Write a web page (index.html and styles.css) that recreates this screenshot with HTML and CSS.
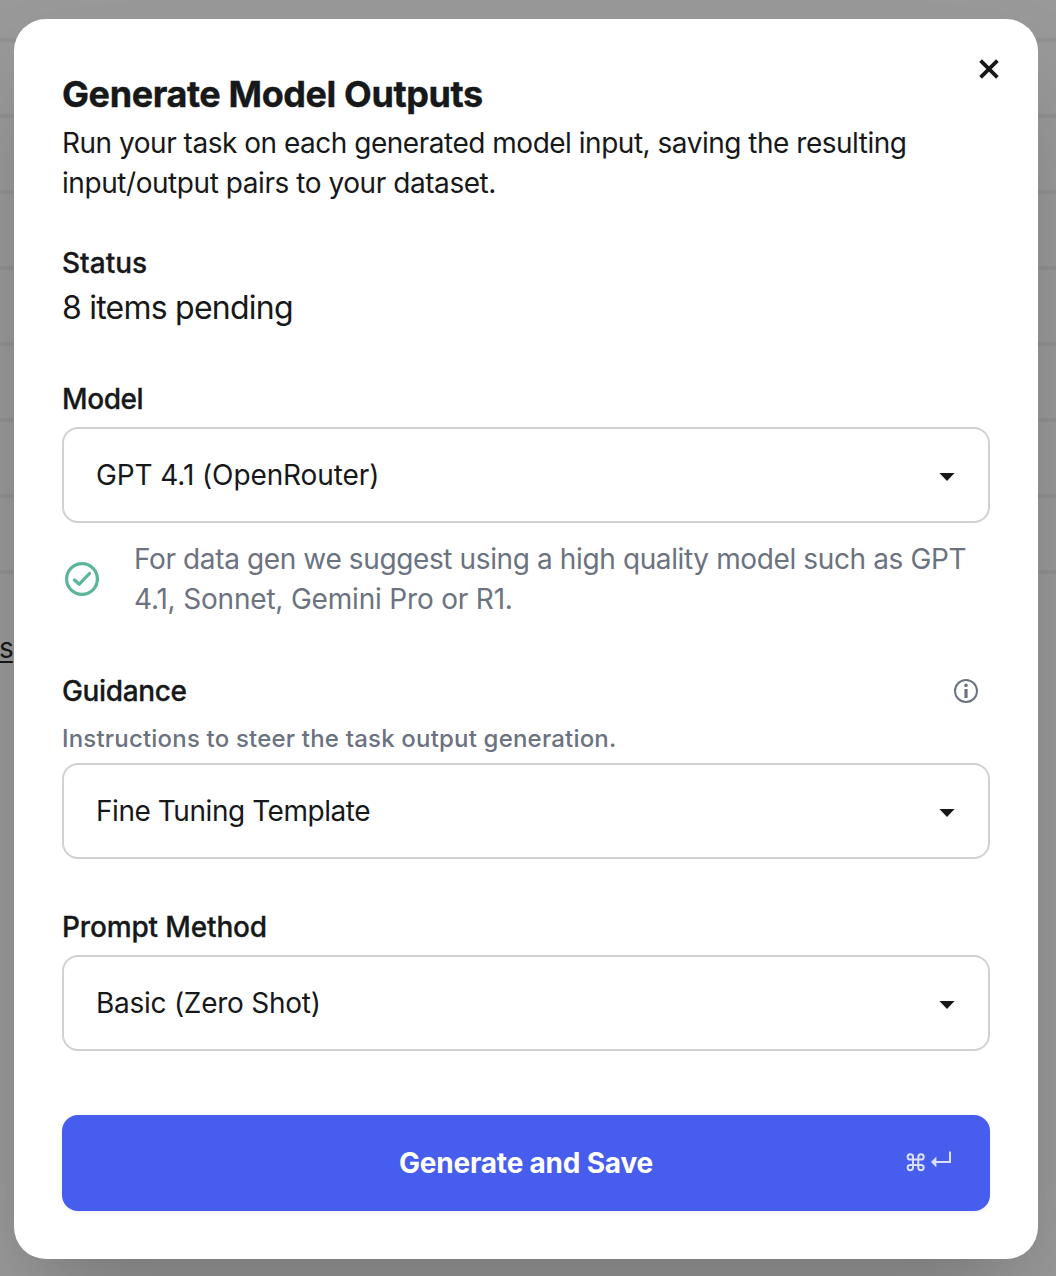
FILE: index.html
```html
<!DOCTYPE html>
<html lang="en">
<head>
<meta charset="utf-8">
<title>Generate Model Outputs</title>
<link rel="stylesheet" href="styles.css">
</head>
<body>
<div class="backdrop">
  <span class="page-link">s</span>
  <main class="modal">
    <button class="close" aria-label="Close"><svg width="22" height="22" viewBox="0 0 22 22"><path d="M2.6 2.6L19.4 19.4M19.4 2.6L2.6 19.4"/></svg></button>
    <h1 class="title">Generate Model Outputs</h1>
    <p class="intro"><span class="intro-a">Run your task on each generated model input, saving the resulting</span><br><span class="intro-b">input/output pairs to your dataset.</span></p>
    <h2 class="label status-label">Status</h2>
    <p class="status">8 items pending</p>
    <h2 class="label model-label">Model</h2>
    <div class="select"><span class="model-value">GPT 4.1 (OpenRouter)</span><svg class="caret" width="16" height="8" viewBox="0 0 16 8"><path d="M0.4 0H15.6L8 8Z"/></svg></div>
    <div class="hint">
      <svg class="check" width="40" height="40" viewBox="0 0 40 40"><circle cx="20" cy="20" r="15.4"/><path d="M12.5 21L17.3 25.2L27.5 14.5"/></svg>
      <p><span class="hint-a">For data gen we suggest using a high quality model such as GPT</span><br><span class="hint-b">4.1, Sonnet, Gemini Pro or R1.</span></p>
    </div>
    <div class="label-row">
      <h2 class="label guidance-label">Guidance</h2>
      <svg class="info" width="24" height="24" viewBox="0 0 24 24"><circle class="ring" cx="12" cy="12" r="11"/><circle cx="12" cy="6.4" r="1.8"/><path d="M10.4 10H13.6V19H10.4Z"/></svg>
    </div>
    <p class="description">Instructions to steer the task output generation.</p>
    <div class="select"><span class="guidance-value">Fine Tuning Template</span><svg class="caret" width="16" height="8" viewBox="0 0 16 8"><path d="M0.4 0H15.6L8 8Z"/></svg></div>
    <h2 class="label method-label">Prompt Method</h2>
    <div class="select"><span class="method-value">Basic (Zero Shot)</span><svg class="caret" width="16" height="8" viewBox="0 0 16 8"><path d="M0.4 0H15.6L8 8Z"/></svg></div>
    <button class="submit"><span>Generate and Save</span>
      <svg class="shortcut" width="48" height="22" viewBox="0 0 48 22"><path d="M9 8.6V5.9A2.7 2.7 0 1 0 6.3 8.6H17A2.7 2.7 0 1 0 14.3 5.9V16.6A2.7 2.7 0 1 0 17 13.9H6.3A2.7 2.7 0 1 0 9 16.6Z"/><path d="M46 .6V11H31"/><path class="head" d="M27 11L32.4 5.6V16.4Z"/></svg>
    </button>
  </main>
</div>
</body>
</html>
```
FILE: styles.css
```css
* { box-sizing: border-box; }
body { margin: 0; font-family: Inter, "Liberation Sans", sans-serif; color: #17181a; }
h1, h2, p { margin: 0; }
button { font: inherit; border: 0; padding: 0; }
svg { display: block; flex: none; }
.backdrop {
  position: relative;
  height: 1276px;
  overflow: hidden;
  padding: 19px 18px 17px 14px;
  background: #999;
}
/* table row rules of the page behind the dialog */
.backdrop::before {
  content: "";
  position: absolute;
  inset: 38px 0 auto;
  height: 536px;
  background: repeating-linear-gradient(#919191 0 4px, transparent 4px 76px);
}
.page-link {
  position: absolute; left: 0; top: 631px;
  font-size: 28px; line-height: 34px; letter-spacing: -1px; text-indent: -1px;
  text-decoration: underline; text-decoration-thickness: 2px; text-underline-offset: 3px;
}
.modal {
  position: relative;
  height: 1240px;
  padding: 48px;
  border-radius: 32px;
  background: #fff;
  box-shadow: 0 50px 100px -24px rgba(0, 0, 0, .25);
  white-space: nowrap;
}
.close { position: absolute; top: 39px; right: 38px; background: none; }
.close path { fill: none; stroke: #17181a; stroke-width: 3.8; }
.title { margin-top: -1px; padding-bottom: 1px; font-size: 36px; line-height: 56px; font-weight: 700; letter-spacing: -.41px; -webkit-text-stroke: .4px; }
.intro { font-size: 28px; line-height: 40px; }
.intro-a { letter-spacing: -.485px; }
.intro-b { letter-spacing: -.44px; }
.label { font-size: 28px; line-height: 40px; font-weight: 500; -webkit-text-stroke: .3px; }
.status-label { margin-top: 40px; }
.status { font-size: 32px; line-height: 50px; letter-spacing: -.77px; }
.model-label { margin: 46px 0 8px; letter-spacing: -.4px; }
.select {
  display: flex; align-items: center; justify-content: space-between;
  height: 96px; padding: 0 33px 0 32px;
  border: 2px solid #d1d1d1; border-radius: 16px;
  font-size: 28px;
}
.model-value { letter-spacing: -.1px; }
.guidance-value { letter-spacing: -.45px; }
.method-value { letter-spacing: -.26px; }
.caret { margin-top: 3px; fill: #17181a; }
.hint { display: flex; align-items: center; gap: 32px; margin-top: 16px; color: #6b7280; font-size: 28px; line-height: 40px; }
.hint-a { letter-spacing: -.38px; }
.hint-b { letter-spacing: -.19px; }
.check { fill: none; stroke: #5ab59b; stroke-width: 3.2; stroke-linecap: round; stroke-linejoin: round; }
.label-row { display: flex; align-items: center; justify-content: space-between; margin-top: 52px; padding-right: 12px; }
.guidance-label { letter-spacing: -.36px; }
.info { fill: #6b7280; }
.info .ring { fill: none; stroke: #6b7280; stroke-width: 2; }
.description { margin: 12px 0 8px; font-size: 24px; line-height: 32px; font-weight: 500; letter-spacing: .19px; color: #6b7280; }
.method-label { margin: 48px 0 8px; letter-spacing: -.15px; }
.submit {
  position: relative; display: flex; align-items: center; justify-content: center;
  width: 100%; height: 96px; margin-top: 64px; border-radius: 16px;
  background: #465dee; color: #fff; font-size: 28px; font-weight: 700; letter-spacing: -.2px;
  box-shadow: 0 2px 4px rgba(0, 0, 0, .06);
}
.shortcut { position: absolute; right: 38px; top: 36px; fill: none; stroke: #dadffc; stroke-width: 2; }
.shortcut .head { fill: #dadffc; stroke: none; }
```
